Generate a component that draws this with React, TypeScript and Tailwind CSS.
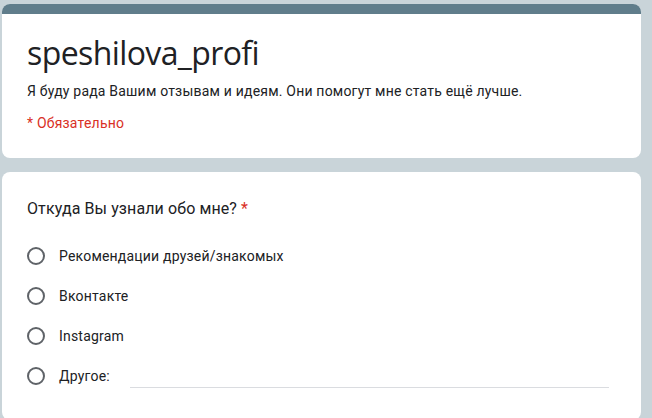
const options = ['Рекомендации друзей/знакомых', 'Вконтакте', 'Instagram'];

function Radio() {
  return <span className="block w-[18px] h-[18px] shrink-0 rounded-full border-2 border-[#5f6368]" />;
}

export default function App() {
  return (
    <div className="h-[418px] overflow-hidden bg-[#c9d4d9] pt-1 pl-[2px] pr-[11px] font-['Roboto',sans-serif] text-[#202124]">
      <div className="rounded-lg bg-white overflow-hidden">
        <div className="h-[10px] bg-[#607d8b]" />
        <div className="pl-[25px] pt-[19px] pb-[25px]">
          <h1 className="text-[32px] leading-[40px] font-['Open_Sans',sans-serif] tracking-[-0.6px]">speshilova_profi</h1>
          <p className="mt-[8px] text-[14px] leading-5 tracking-[0.2px]">
            Я буду рада Вашим отзывам и идеям. Они помогут мне стать ещё лучше.
          </p>
          <p className="mt-3 text-[14px] leading-5 tracking-[0.2px] text-[#d93025]">* Обязательно</p>
        </div>
      </div>

      <div className="mt-[14px] rounded-lg bg-white pl-[25px] pt-[25px] pb-6">
        <div className="text-[16px] leading-6 tracking-[0.1px]">
          Откуда Вы узнали обо мне? <span className="text-[#d93025]">*</span>
        </div>
        <div className="mt-[15px] flex flex-col">
          {options.map((o) => (
            <label key={o} className="flex items-center h-10">
              <Radio />
              <span className="ml-[14px] text-[14px] tracking-[0.2px]">{o}</span>
            </label>
          ))}
          <div className="flex items-center h-10">
            <Radio />
            <span className="ml-[14px] text-[14px] tracking-[0.2px]">Другое:</span>
            <div className="ml-5 mr-[32px] flex-1 self-end mb-[8px] border-b border-[#dadce0] h-px" />
          </div>
        </div>
      </div>
    </div>
  );
}
